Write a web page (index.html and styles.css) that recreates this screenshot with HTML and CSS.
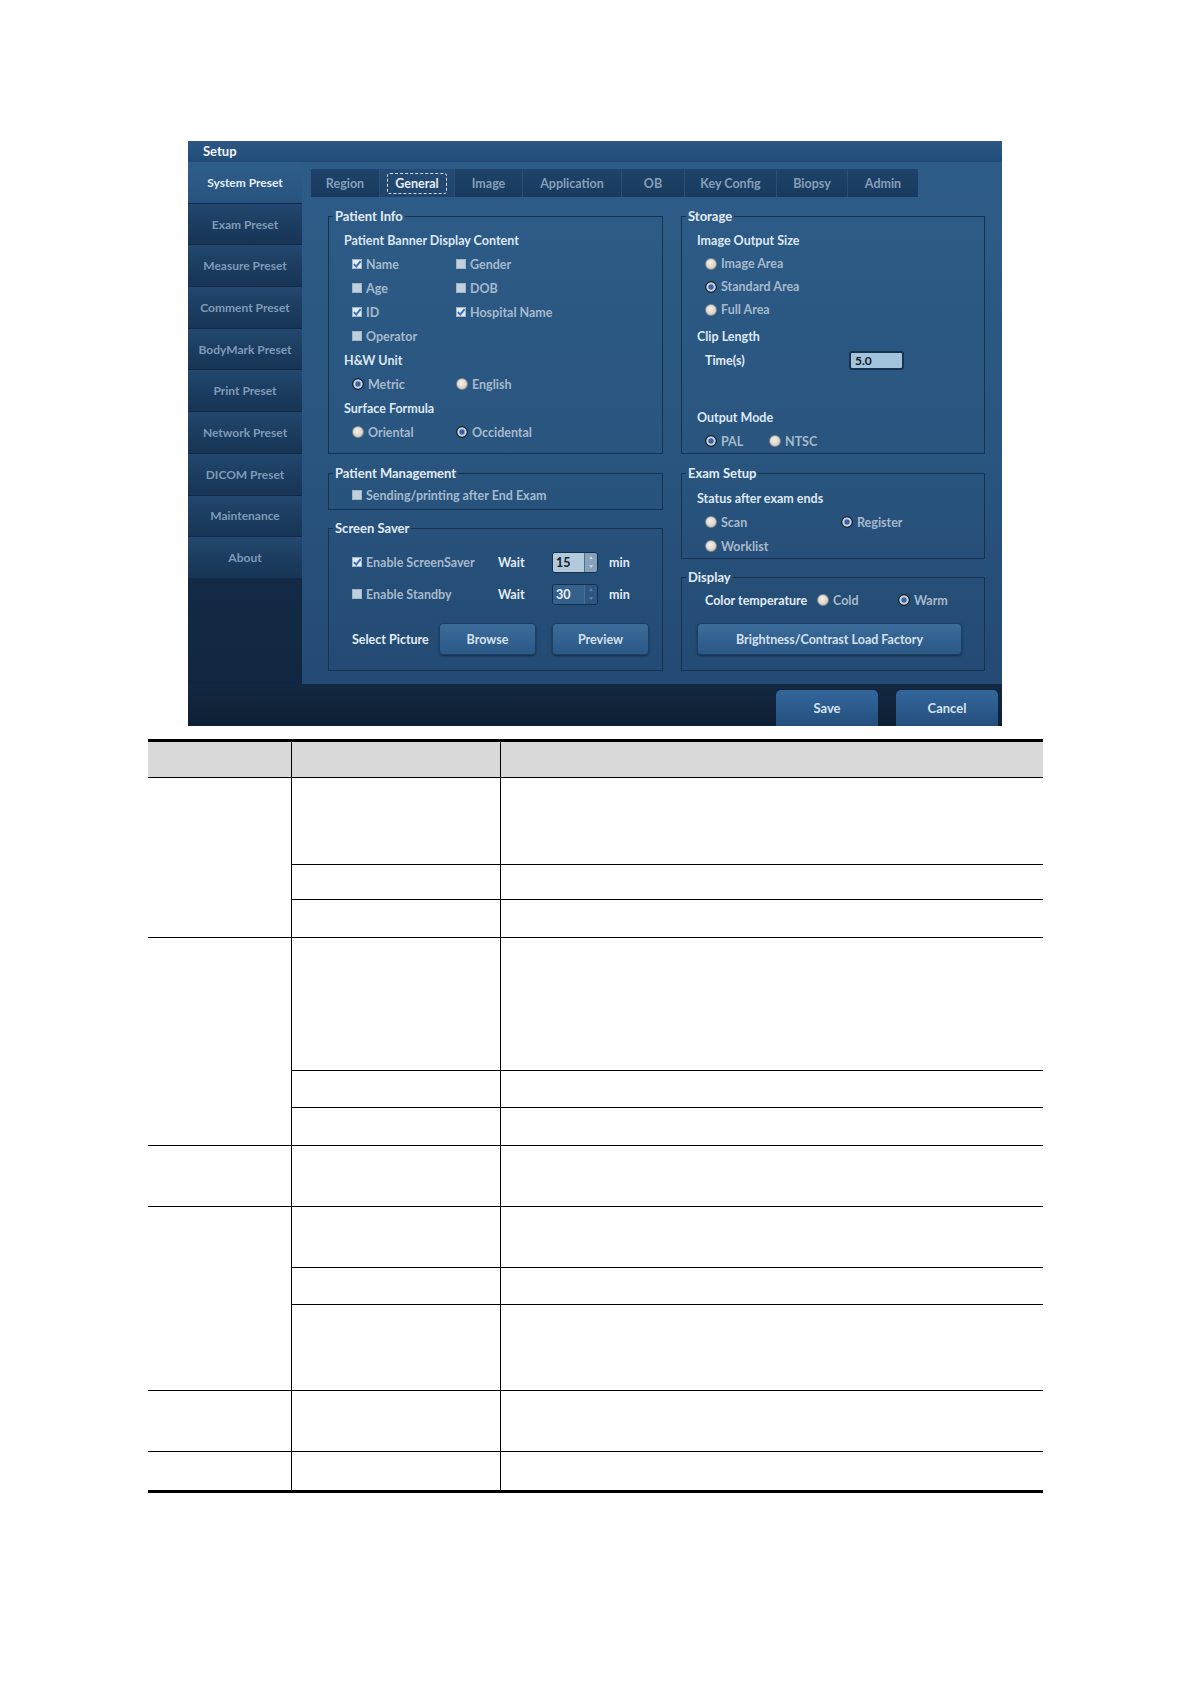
FILE: index.html
```html
<!DOCTYPE html>
<html>
<head>
<meta charset="utf-8">
<title>Setup</title>
<link rel="stylesheet" href="styles.css">
</head>
<body>
<div class="setup">
  <div class="titlebar">Setup</div>
  <div class="main">
    <nav class="sidebar">
      <div class="nav-item active">System Preset</div>
      <div class="nav-item">Exam Preset</div>
      <div class="nav-item">Measure Preset</div>
      <div class="nav-item">Comment Preset</div>
      <div class="nav-item">BodyMark Preset</div>
      <div class="nav-item">Print Preset</div>
      <div class="nav-item">Network Preset</div>
      <div class="nav-item">DICOM Preset</div>
      <div class="nav-item">Maintenance</div>
      <div class="nav-item">About</div>
    </nav>
    <div class="content">
      <div class="tabs">
        <div class="tab w-region">Region</div>
        <div class="tab w-general active"><span class="focus">General</span></div>
        <div class="tab w-image">Image</div>
        <div class="tab w-app">Application</div>
        <div class="tab w-ob">OB</div>
        <div class="tab w-key">Key Config</div>
        <div class="tab w-biopsy">Biopsy</div>
        <div class="tab w-admin">Admin</div>
      </div>
      <div class="cols">
        <div class="col col-left">
          <fieldset class="grp pi">
            <legend>Patient Info</legend>
            <div class="row lbl">Patient Banner Display Content</div>
            <div class="row opts c104">
              <span class="opt"><span class="cb on"><svg viewBox="0 0 10 10" width="10" height="10"><path d="M1.8 5.1 L4.2 7.6 L8.6 2.2" fill="none" stroke="#2d6ec6" stroke-width="1.9"/></svg></span>Name</span>
              <span class="opt"><span class="cb"></span>Gender</span>
            </div>
            <div class="row opts c104">
              <span class="opt"><span class="cb"></span>Age</span>
              <span class="opt"><span class="cb"></span>DOB</span>
            </div>
            <div class="row opts c104">
              <span class="opt"><span class="cb on"><svg viewBox="0 0 10 10" width="10" height="10"><path d="M1.8 5.1 L4.2 7.6 L8.6 2.2" fill="none" stroke="#2d6ec6" stroke-width="1.9"/></svg></span>ID</span>
              <span class="opt"><span class="cb on"><svg viewBox="0 0 10 10" width="10" height="10"><path d="M1.8 5.1 L4.2 7.6 L8.6 2.2" fill="none" stroke="#2d6ec6" stroke-width="1.9"/></svg></span>Hospital Name</span>
            </div>
            <div class="row opts c104">
              <span class="opt"><span class="cb"></span>Operator</span>
            </div>
            <div class="row lbl">H&amp;W Unit</div>
            <div class="row opts c104">
              <span class="opt rgap"><span class="rd on"></span>Metric</span>
              <span class="opt rgap"><span class="rd"></span>English</span>
            </div>
            <div class="row lbl">Surface Formula</div>
            <div class="row opts c104">
              <span class="opt rgap"><span class="rd"></span>Oriental</span>
              <span class="opt rgap"><span class="rd on"></span>Occidental</span>
            </div>
          </fieldset>

          <fieldset class="grp pm">
            <legend>Patient Management</legend>
            <div class="row opts">
              <span class="opt"><span class="cb"></span>Sending/printing after End Exam</span>
            </div>
          </fieldset>

          <fieldset class="grp ss">
            <legend>Screen Saver</legend>
            <div class="row tall opts">
              <span class="opt w-enable"><span class="cb on"><svg viewBox="0 0 10 10" width="10" height="10"><path d="M1.8 5.1 L4.2 7.6 L8.6 2.2" fill="none" stroke="#2d6ec6" stroke-width="1.9"/></svg></span>Enable ScreenSaver</span>
              <span class="w-wait">Wait</span>
              <span class="spin light"><span class="spin-val">15</span><span class="spin-btns"><span class="arr up"></span><span class="arr dn"></span></span></span>
              <span class="min">min</span>
            </div>
            <div class="row tall opts">
              <span class="opt w-enable"><span class="cb"></span>Enable Standby</span>
              <span class="w-wait">Wait</span>
              <span class="spin dark"><span class="spin-val">30</span><span class="spin-btns"><span class="arr up"></span><span class="arr dn"></span></span></span>
              <span class="min">min</span>
            </div>
            <div class="row tall opts pic">
              <span class="w-sel">Select Picture</span>
              <span class="btn w-browse">Browse</span>
              <span class="btn w-preview">Preview</span>
            </div>
          </fieldset>
        </div>

        <div class="col col-right">
          <fieldset class="grp st">
            <legend>Storage</legend>
            <div class="row lbl">Image Output Size</div>
            <div class="row r23 opts"><span class="opt rgap"><span class="rd"></span>Image Area</span></div>
            <div class="row r23 opts"><span class="opt rgap"><span class="rd on"></span>Standard Area</span></div>
            <div class="row r23 opts"><span class="opt rgap"><span class="rd"></span>Full Area</span></div>
            <div class="row lbl clip">Clip Length</div>
            <div class="row opts">
              <span class="w-time">Time(s)</span>
              <span class="txt">5.0</span>
            </div>
            <div class="row lbl outmode">Output Mode</div>
            <div class="row opts">
              <span class="opt rgap w-pal"><span class="rd on"></span>PAL</span>
              <span class="opt rgap"><span class="rd"></span>NTSC</span>
            </div>
          </fieldset>

          <fieldset class="grp ex">
            <legend>Exam Setup</legend>
            <div class="row lbl">Status after exam ends</div>
            <div class="row opts">
              <span class="opt rgap w-scan"><span class="rd"></span>Scan</span>
              <span class="opt rgap"><span class="rd on"></span>Register</span>
            </div>
            <div class="row opts"><span class="opt rgap"><span class="rd"></span>Worklist</span></div>
          </fieldset>

          <fieldset class="grp dp">
            <legend>Display</legend>
            <div class="row opts">
              <span class="w-color">Color temperature</span>
              <span class="opt rgap w-cold"><span class="rd"></span>Cold</span>
              <span class="opt rgap"><span class="rd on"></span>Warm</span>
            </div>
            <div class="btnrow">
              <span class="btn w-bright">Brightness/Contrast Load Factory</span>
            </div>
          </fieldset>
        </div>
      </div>
    </div>
  </div>
  <div class="bottombar">
    <span class="bb-btn">Save</span>
    <span class="bb-btn">Cancel</span>
  </div>
</div>

<table class="spec">
  <colgroup>
    <col class="c1">
    <col class="c2">
    <col class="c3">
  </colgroup>
  <thead>
    <tr class="hd"><th></th><th></th><th></th></tr>
  </thead>
  <tbody>
    <tr class="h87"><td rowspan="3"></td><td></td><td></td></tr>
    <tr class="h35"><td></td><td></td></tr>
    <tr class="h38"><td></td><td></td></tr>
    <tr class="h133"><td rowspan="3"></td><td></td><td></td></tr>
    <tr class="h37"><td></td><td></td></tr>
    <tr class="h38"><td></td><td></td></tr>
    <tr class="h61"><td></td><td></td><td></td></tr>
    <tr class="h61"><td rowspan="3"></td><td></td><td></td></tr>
    <tr class="h37"><td></td><td></td></tr>
    <tr class="h86"><td></td><td></td></tr>
    <tr class="h61"><td></td><td></td><td></td></tr>
    <tr class="h38 last"><td></td><td></td><td></td></tr>
  </tbody>
</table>
</body>
</html>
```

FILE: styles.css
```css
html, body {
  margin: 0;
  padding: 0;
  background: #ffffff;
}

body {
  font-family: Lato, "Liberation Sans", Arial, sans-serif;
  width: 1190px;
  min-height: 1684px;
}

/* ---------- setup window ---------- */
.setup {
  width: 814px;
  margin: 141px 0 0 188px;
  background: #1c3f66;
}

.titlebar {
  height: 21px;
  line-height: 21px;
  padding-left: 15px;
  color: #f2f6fa;
  font-weight: 700;
  font-size: 13px;
  background: linear-gradient(#2c5886, #224b77);
}

.main {
  display: flex;
  height: 522px;
}

.sidebar {
  width: 114px;
  flex: none;
  display: flex;
  flex-direction: column;
  background: linear-gradient(#183759, #112741);
}

.nav-item {
  height: 41.7px;
  flex: none;
  box-sizing: border-box;
  display: flex;
  align-items: center;
  justify-content: center;
  font-size: 12px;
  font-weight: 700;
  color: #7f9ab6;
  background: linear-gradient(#23476e, #1b3c60 55%, #173556);
  border-bottom: 1px solid #122a47;
}

.nav-item.active {
  color: #e6eef6;
  background: linear-gradient(#2f5e8b, #28537f);
}

.content {
  flex: 1;
  padding: 7px 0 0 9px;
  background: linear-gradient(#2e5c88, #29557f 55%, #234a72);
}

/* ---------- tabs ---------- */
.tabs {
  display: flex;
  height: 28px;
  width: 607px;
  background: linear-gradient(#1f4369, #183a5f);
}

.tab {
  box-sizing: border-box;
  display: flex;
  align-items: center;
  justify-content: center;
  color: #859fba;
  font-weight: 700;
  font-size: 12.5px;
  border-right: 1px solid #2a4e76;
}

.tab.active {
  color: #e4edf5;
  background: linear-gradient(#244b74, #1f446b);
}

.tab .focus {
  border: 1px dashed #cfdbe7;
  border-radius: 3px;
  padding: 2px 7px;
}

.w-region { width: 69px; }
.w-general { width: 75px; }
.w-image { width: 68px; }
.w-app { width: 99px; }
.w-ob { width: 63px; }
.w-key { width: 92px; }
.w-biopsy { width: 71px; }
.w-admin { width: 70px; border-right: none; }

/* ---------- group boxes ---------- */
.cols {
  display: flex;
  gap: 18px;
  margin: 12px 0 0 17px;
}

.col {
  display: flex;
  flex-direction: column;
}

.col-left { width: 335px; }
.col-right { width: 304px; }

.grp {
  margin: 0;
  padding: 0;
  border: 1px solid #15324f;
  min-width: 0;
}

.grp legend {
  margin-left: 4px;
  padding: 0 2px;
  font-size: 13px;
  line-height: 14px;
  font-weight: 700;
  color: #e1ebf4;
}

.pi { padding: 5px 0 9px; }
.pm { margin-top: 12px; padding: 3px 0 2px; }
.ss { margin-top: 11px; padding: 11px 0 15px; }
.st { padding: 5px 0 0; }
.ex { margin-top: 12px; padding: 6px 0 0; }
.dp { margin-top: 11px; padding: 4px 0 15px; }

.row {
  height: 24px;
  display: flex;
  align-items: center;
  font-size: 12.5px;
  font-weight: 700;
  color: #dde8f2;
  white-space: nowrap;
}

.row.r23 { height: 23px; }
.row.tall { height: 32px; }
.row.pic { margin-top: 13px; }
.row.clip { margin-top: 3px; }
.row.outmode { margin-top: 33px; }

.lbl { padding-left: 15px; }
.opts { padding-left: 23px; }

.c104 > .opt:first-child { width: 104px; }

.opt {
  display: flex;
  align-items: center;
  gap: 4px;
  color: #a6b9cc;
}

.opt.rgap { gap: 4px; }

.cb {
  flex: none;
  width: 10px;
  height: 10px;
  display: inline-block;
  background: #c2d0dc;
  border-radius: 1px;
  box-shadow: inset 0 0 0 1px #a2b5c6;
}

.cb.on {
  background: #e4ecf2;
}

.cb svg { display: block; }

.rd {
  flex: none;
  box-sizing: border-box;
  width: 12px;
  height: 12px;
  border-radius: 50%;
  border: 1px solid #7f8890;
  background: radial-gradient(circle at 42% 38%, #f6f1ea 0, #e0d7ca 55%, #c2b9ad 100%);
}

.rd.on {
  border: 1px solid #15222f;
  background: radial-gradient(circle closest-side, #3b69b1 0, #2e5aa0 46%, #9fb1c4 54%, #c8d3de 70%, #aab8c6 88%, #3c4c5e 100%);
}

/* screen saver */
.w-enable { width: 146px; }
.w-wait { width: 54px; color: #e2ebf4; }
.min { margin-left: 11px; color: #e2ebf4; }
.w-sel { width: 87px; color: #e2ebf4; }

.spin {
  display: flex;
  width: 46px;
  height: 21px;
  box-sizing: border-box;
  border: 1px solid #15304e;
  border-radius: 3px;
  overflow: hidden;
}

.spin-val {
  flex: 1;
  padding-left: 3px;
  line-height: 19px;
  font-size: 12.5px;
}

.spin-btns {
  width: 12px;
  display: flex;
  flex-direction: column;
  align-items: center;
  justify-content: space-around;
  border-left: 1px solid #4d6f8f;
}

.spin.light .spin-val { background: #b3cadc; color: #14202c; }
.spin.light .spin-btns { background: #86a1b9; }
.spin.dark .spin-val { background: #34618b; color: #eef3f8; }
.spin.dark .spin-btns { background: #2d5680; }

.arr {
  width: 0;
  height: 0;
  border-left: 2.5px solid transparent;
  border-right: 2.5px solid transparent;
}

.arr.up { border-bottom: 3px solid #c8d6e2; }
.arr.dn { border-top: 3px solid #c8d6e2; }
.spin.dark .arr.up { border-bottom-color: #5f83a6; }
.spin.dark .arr.dn { border-top-color: #5f83a6; }

.btn {
  height: 32px;
  box-sizing: border-box;
  display: flex;
  align-items: center;
  justify-content: center;
  border-radius: 4px;
  border: 1px solid #1c3f66;
  background: linear-gradient(#3b6c9a, #2b5886);
  box-shadow: 0 1px 2px rgba(5, 18, 34, 0.55);
  color: #d4e1ed;
  font-weight: 700;
  font-size: 12.5px;
}

.w-browse { width: 97px; }
.w-preview { width: 97px; margin-left: 16px; }

/* storage */
.w-time { width: 144px; color: #e2ebf4; }

.txt {
  width: 55px;
  height: 19px;
  box-sizing: border-box;
  border: 2px solid #163250;
  border-radius: 3px;
  background: #a2c3dc;
  color: #0e1a26;
  font-size: 12px;
  line-height: 15px;
  padding-left: 4px;
}

.w-pal { width: 64px; }
.w-scan { width: 136px; }

.w-color { width: 112px; color: #e2ebf4; }
.w-cold { width: 81px; }

.btnrow {
  margin-top: 11px;
  padding-left: 15px;
}

.w-bright { width: 265px; }

/* bottom bar */
.bottombar {
  height: 42px;
  display: flex;
  justify-content: flex-end;
  align-items: flex-end;
  gap: 18px;
  padding-right: 4px;
  background: linear-gradient(#132841, #0e1f33);
}

.bb-btn {
  width: 102px;
  height: 36px;
  display: flex;
  align-items: center;
  justify-content: center;
  border-radius: 5px 5px 0 0;
  background: linear-gradient(#33669a, #244f7e);
  color: #d6e3f0;
  font-weight: 700;
  font-size: 13px;
}

/* ---------- empty spec table ---------- */
.spec {
  margin: 13px 0 0 148px;
  width: 895px;
  border-collapse: separate;
  border-spacing: 0;
  border-top: 3px solid #000;
  border-bottom: 3px solid #000;
  table-layout: fixed;
}

.spec .c1 { width: 144px; }
.spec .c2 { width: 209px; }
.spec .c3 { width: 542px; }

.spec th,
.spec td {
  padding: 0;
  border-bottom: 1px solid #000;
  border-right: 1px solid #000;
}

.spec th:last-child,
.spec tr > td:last-child {
  border-right: none;
}

.spec th { background: #d9d9d9; }

.spec tr.last td { border-bottom: none; }

.hd { height: 36px; }
.h87 { height: 87px; }
.h35 { height: 35px; }
.h38 { height: 38px; }
.h133 { height: 133px; }
.h37 { height: 37px; }
.h61 { height: 61px; }
.h86 { height: 86px; }
```
